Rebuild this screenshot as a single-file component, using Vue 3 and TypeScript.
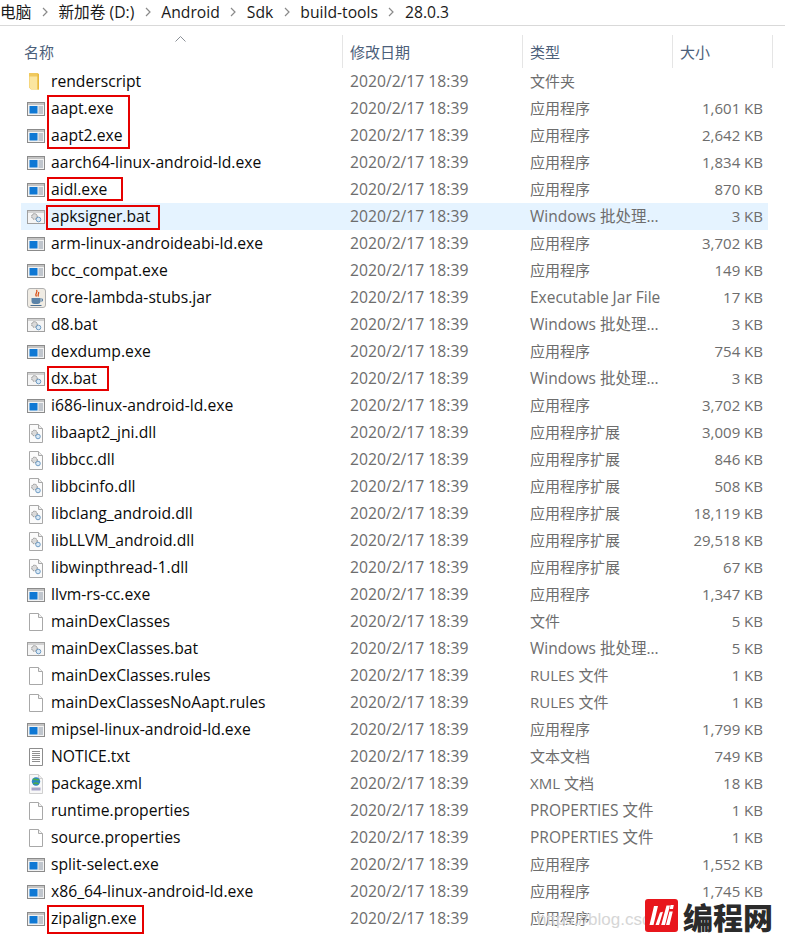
<script setup lang="ts">
type Kind = 'folder' | 'exe' | 'bat' | 'dll' | 'jar' | 'file' | 'txt' | 'xml'
interface Row { name: string; kind: Kind; type: string; size: string; markClass?: string; selected?: boolean }

const APP = '应用程序'
const EXT = '应用程序扩展'
const BAT = 'Windows 批处理...'

const crumbs = ['电脑', '新加卷 (D:)', 'Android', 'Sdk', 'build-tools', '28.0.3']

const isWide = (t: string) => /^(Windows|Executable|PROPERTIES)/.test(t)

const rows: Row[] = [
  { name: 'renderscript', kind: 'folder', type: '文件夹', size: '' },
  { name: 'aapt.exe', kind: 'exe', type: APP, size: '1,601 KB', markClass: 'mark-aapt' },
  { name: 'aapt2.exe', kind: 'exe', type: APP, size: '2,642 KB' },
  { name: 'aarch64-linux-android-ld.exe', kind: 'exe', type: APP, size: '1,834 KB' },
  { name: 'aidl.exe', kind: 'exe', type: APP, size: '870 KB', markClass: 'mark-aidl' },
  { name: 'apksigner.bat', kind: 'bat', type: BAT, size: '3 KB', markClass: 'mark-apk', selected: true },
  { name: 'arm-linux-androideabi-ld.exe', kind: 'exe', type: APP, size: '3,702 KB' },
  { name: 'bcc_compat.exe', kind: 'exe', type: APP, size: '149 KB' },
  { name: 'core-lambda-stubs.jar', kind: 'jar', type: 'Executable Jar File', size: '17 KB' },
  { name: 'd8.bat', kind: 'bat', type: BAT, size: '3 KB' },
  { name: 'dexdump.exe', kind: 'exe', type: APP, size: '754 KB' },
  { name: 'dx.bat', kind: 'bat', type: BAT, size: '3 KB', markClass: 'mark-dx' },
  { name: 'i686-linux-android-ld.exe', kind: 'exe', type: APP, size: '3,702 KB' },
  { name: 'libaapt2_jni.dll', kind: 'dll', type: EXT, size: '3,009 KB' },
  { name: 'libbcc.dll', kind: 'dll', type: EXT, size: '846 KB' },
  { name: 'libbcinfo.dll', kind: 'dll', type: EXT, size: '508 KB' },
  { name: 'libclang_android.dll', kind: 'dll', type: EXT, size: '18,119 KB' },
  { name: 'libLLVM_android.dll', kind: 'dll', type: EXT, size: '29,518 KB' },
  { name: 'libwinpthread-1.dll', kind: 'dll', type: EXT, size: '67 KB' },
  { name: 'llvm-rs-cc.exe', kind: 'exe', type: APP, size: '1,347 KB' },
  { name: 'mainDexClasses', kind: 'file', type: '文件', size: '5 KB' },
  { name: 'mainDexClasses.bat', kind: 'bat', type: BAT, size: '5 KB' },
  { name: 'mainDexClasses.rules', kind: 'file', type: 'RULES 文件', size: '1 KB' },
  { name: 'mainDexClassesNoAapt.rules', kind: 'file', type: 'RULES 文件', size: '1 KB' },
  { name: 'mipsel-linux-android-ld.exe', kind: 'exe', type: APP, size: '1,799 KB' },
  { name: 'NOTICE.txt', kind: 'txt', type: '文本文档', size: '749 KB' },
  { name: 'package.xml', kind: 'xml', type: 'XML 文档', size: '18 KB' },
  { name: 'runtime.properties', kind: 'file', type: 'PROPERTIES 文件', size: '1 KB' },
  { name: 'source.properties', kind: 'file', type: 'PROPERTIES 文件', size: '1 KB' },
  { name: 'split-select.exe', kind: 'exe', type: APP, size: '1,552 KB' },
  { name: 'x86_64-linux-android-ld.exe', kind: 'exe', type: APP, size: '1,745 KB' },
  { name: 'zipalign.exe', kind: 'exe', type: APP, size: '', markClass: 'mark-zip' },
]
</script>

<template>
  <div class="page">
    <nav class="crumbs">
      <template v-for="(c, i) in crumbs" :key="c">
        <span class="crumb">{{ c }}</span>
        <svg v-if="i < crumbs.length - 1" class="chev" width="6" height="10" viewBox="0 0 6 10">
          <path d="M1 1l4 4-4 4" fill="none" stroke="#8a8a8a" stroke-width="1.2" />
        </svg>
      </template>
    </nav>

    <div class="list">
      <header class="head">
        <div class="hcell hname">
          名称
          <svg class="sort" width="11" height="6" viewBox="0 0 11 6">
            <path d="M.5 5.500l5-5 5 5" fill="none" stroke="#8a8f96" stroke-width="1" />
          </svg>
        </div>
        <div class="hcell hdate">修改日期</div>
        <div class="hcell htype">类型</div>
        <div class="hcell hsize">大小</div>
      </header>

      <div v-for="r in rows" :key="r.name" class="row" :class="{ selected: r.selected }">
        <div class="name">
          <svg class="icon" width="20" height="20" viewBox="0 0 20 20">
            <template v-if="r.kind === 'exe'">
              <rect x=".5" y="3.500" width="17" height="13" fill="#f2f2f2" stroke="#8b8b8b" />
              <rect x="1" y="4" width="16" height="2" fill="#c4c4c4" />
              <rect x="2.500" y="7" width="8" height="7.500" fill="#0f78d4" />
              <path d="M11.500 8h4.500M11.500 10h4.500M11.500 12h4.500M11.500 14h4.500" stroke="#8d99a8" />
            </template>
            <template v-else-if="r.kind === 'bat'">
              <rect x=".5" y="3.500" width="17" height="13" fill="#f5f5f5" stroke="#a0a0a0" />
              <rect x="1" y="4" width="16" height="2" fill="#d2d2d2" />
              <circle cx="7.500" cy="9.500" r="2.800" fill="#dadada" stroke="#858585" stroke-dasharray="1.500 .8" />
              <circle cx="11.500" cy="12.500" r="2.300" fill="#d9e8f5" stroke="#6f9cc4" />
            </template>
            <template v-else-if="r.kind === 'dll'">
              <path d="M2.500 1.500h9l4 4v14h-13z" fill="#fbfbfb" stroke="#a8a8a8" />
              <path d="M11.500 1.500v4h4" fill="#eeeeee" stroke="#a8a8a8" />
              <circle cx="7.500" cy="10" r="2.800" fill="#dadada" stroke="#858585" stroke-dasharray="1.500 .8" />
              <circle cx="11" cy="13.500" r="2.300" fill="#d9e8f5" stroke="#6f9cc4" />
            </template>
            <template v-else-if="r.kind === 'jar'">
              <rect x=".5" y=".5" width="18" height="19" rx="2.500" fill="#f0ece4" stroke="#b0b0b0" />
              <path d="M9.500 2c2 2.500-2.500 3.500 0 6.500M11.500 4c1 1.500-1.500 2.500 0 4.500" fill="none" stroke="#d8541c" stroke-width="1.300" />
              <path d="M4.500 10h9v3a3 3 0 0 1-3 3h-3a3 3 0 0 1-3-3z" fill="#5b83a8" />
              <path d="M13.500 11h2v2h-2" fill="none" stroke="#5b83a8" />
              <path d="M3.500 17.500h11" stroke="#4a6f92" />
            </template>
            <template v-else-if="r.kind === 'folder'">
              <path d="M2 1h9l1 1.500v15H4l-2-2z" fill="#f0c95e" />
              <path d="M2.500 4.500h8v13H4.500l-2-2z" fill="#fbe6a0" />
              <path d="M10.500 2H12v15.500h-1.500z" fill="#e8b93f" />
            </template>
            <template v-else-if="r.kind === 'txt'">
              <path d="M2.500 1.500h13v17h-13z" fill="#fff" stroke="#8d8d8d" />
              <path d="M5 4.500h8M5 6.500h8M5 8.500h8M5 10.500h8M5 12.500h8M5 14.500h8" stroke="#8f8f8f" />
            </template>
            <template v-else-if="r.kind === 'xml'">
              <path d="M2.500 .5h9l4 4v15h-13z" fill="#f8f8f8" stroke="#cfcfcf" />
              <path d="M11.500 .5v4h4" fill="#ececec" stroke="#cfcfcf" />
              <circle cx="9" cy="7.500" r="4.200" fill="#2f86c4" />
              <path d="M6 5.500c2-1 3.500 1.200 6 0M6.500 10c1.500-1.500 3.500-1 5 0" fill="none" stroke="#4dae4a" stroke-width="1.600" />
              <rect x="4.500" y="13.500" width="9" height="3" fill="#a9a5c9" />
            </template>
            <template v-else>
              <path d="M2.500 1.500h9l4 4v13h-13z" fill="#fff" stroke="#a8a8a8" />
              <path d="M11.500 1.500v4h4" fill="#f3f3f3" stroke="#a8a8a8" />
            </template>
          </svg>
          <span class="label">{{ r.name }}</span>
          <span v-if="r.markClass" class="mark" :class="r.markClass"></span>
        </div>
        <div class="date">2020/2/17 18:39</div>
        <div class="type" :class="{ wide: isWide(r.type) }">{{ r.type }}</div>
        <div class="size">{{ r.size }}</div>
      </div>

      <div class="stamp">https://blog.csdn</div>
      <div class="brand">
        <svg class="brand-logo" width="33" height="33" viewBox="0 0 33 33">
          <rect width="33" height="33" rx="3" fill="#e8161c" />
          <path d="M9 7h4L8.500 26h-4zM15 13.500l3-.8L14 26h-3.500zM21.500 6.500h3.500L20 26h-3.800zM24.500 12.500h3.300L24.500 26H21zM25.500 6h3.300l-.8 4h-3.300z" fill="#fff" />
        </svg>
        <span class="brand-text">编程网</span>
      </div>
    </div>
  </div>
</template>

<style>
html, body { margin: 0; background: #fff; }
</style>

<style scoped>
.page {
  width: 785px;
  height: 941px;
  overflow: hidden;
  background: #fff;
  font-family: "Open Sans", "Noto Sans CJK SC", sans-serif;
  font-size: 15px;
}
.crumbs {
  height: 26px;
  box-sizing: border-box;
  border-bottom: 1px solid #d9d9d9;
  display: flex;
  align-items: center;
  gap: 10.5px;
  color: #1a1a1a;
  font-size: 15.7px;
  padding-bottom: 2px;
}
.crumb { white-space: nowrap; }
.chev { flex: none; }
.list { position: relative; padding-left: 21px; padding-top: 9px; }
.head {
  display: grid;
  grid-template-columns: 322px 180px 150px 100px;
  height: 33px;
  color: #4c607a;
}
.hcell {
  position: relative;
  box-sizing: border-box;
  border-right: 1px solid #e5e5e5;
  padding-left: 7px;
  line-height: 35px;
  height: 33px;
}
.hname { padding-left: 3px; }
.sort { position: absolute; left: 154px; top: 1px; }
.row {
  display: grid;
  grid-template-columns: 322px 180px 150px 95px;
  width: 747px;
  height: 27px;
  align-items: center;
  color: #6d6d6d;
  white-space: nowrap;
}
.row.selected { background: #e5f3ff; }
.name { position: relative; display: flex; align-items: center; height: 27px; color: #0a0a0a; font-size: 15.7px; }
.label { padding-bottom: 2px; }
.icon { margin-left: 6px; margin-right: 4px; flex: none; }
.date { padding-left: 7px; padding-bottom: 2px; font-size: 15.7px; }
.type { padding-left: 7px; padding-bottom: 2px; }
.type.wide { font-size: 15.5px; }
.size { text-align: right; padding-bottom: 2px; padding-right: 5px; }
.mark { position: absolute; box-sizing: border-box; border: 2px solid #e60000; }
.mark-aapt { left: 26px; top: 0; width: 83px; height: 54px; }
.mark-aidl { left: 26px; top: 1px; width: 76px; height: 24px; }
.mark-apk { left: 25px; top: 2px; width: 114px; height: 25px; }
.mark-dx { left: 26px; top: 1px; width: 62px; height: 25px; }
.mark-zip { left: 26px; top: 0; width: 97px; height: 29px; }
.stamp {
  position: absolute;
  left: 537px;
  top: 884px;
  color: #d6d6d6;
  font-family: "Liberation Sans", sans-serif;
  font-size: 17px;
  white-space: nowrap;
}
.brand {
  position: absolute;
  left: 645px;
  top: 873px;
  display: flex;
  align-items: center;
  gap: 5px;
}
.brand-logo { flex: none; }
.brand-text {
  font-family: "Noto Sans CJK SC", sans-serif;
  font-weight: 900;
  font-size: 30px;
  line-height: 32px;
  color: #2b2b2b;
}
</style>
